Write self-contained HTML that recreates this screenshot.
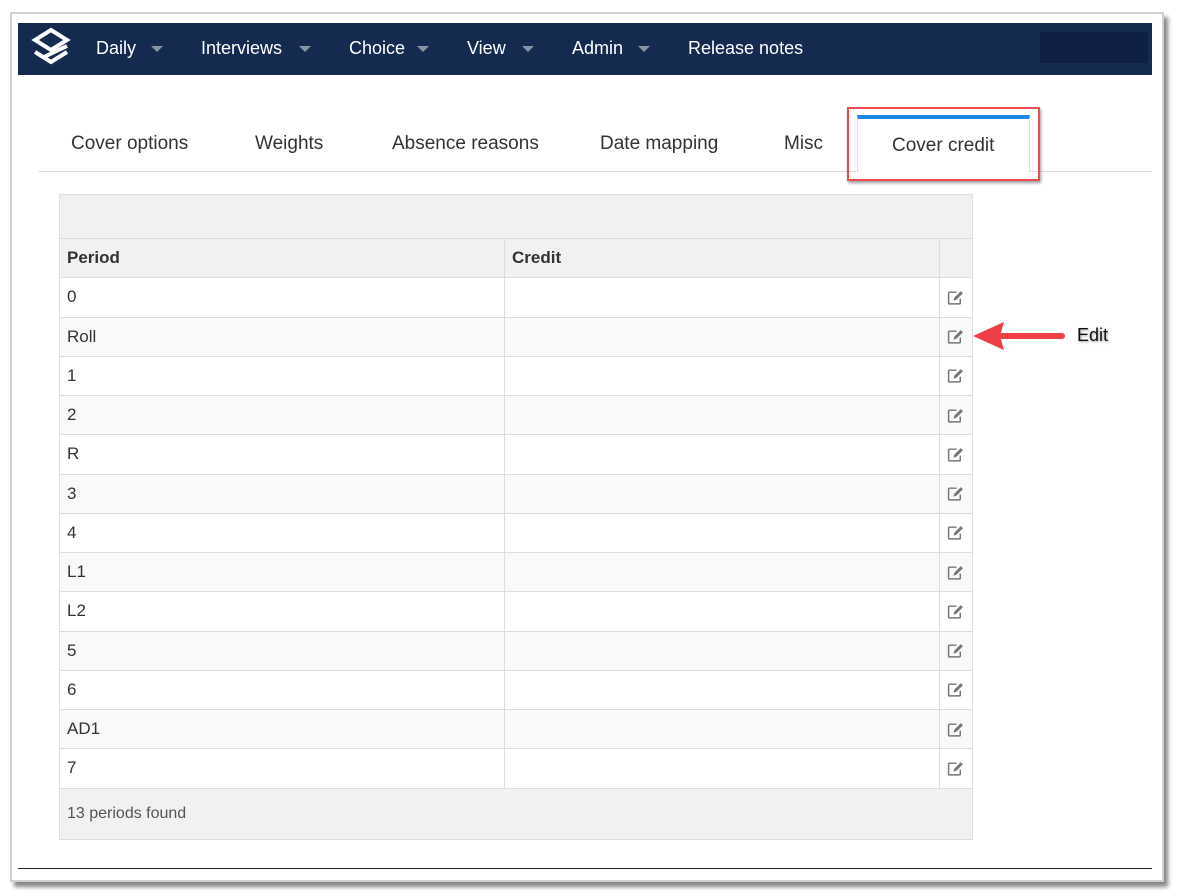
<!DOCTYPE html>
<html><head><style>
body{margin:0;width:1177px;height:895px;background:#fff;font-family:"Liberation Sans",sans-serif;position:relative;overflow:hidden}
.frame{position:absolute;left:10px;top:12px;width:1150px;height:866px;border:2px solid #d0d0d0;box-shadow:4px 5px 4px #888;background:#fff}
.nav{position:absolute;left:18px;top:23px;width:1134px;height:52px;background:#142a4e}
.nav span{position:absolute;top:15px;color:#fff;font-size:18px}
.nav i{position:absolute;top:23px;width:0;height:0;border-left:6px solid transparent;border-right:6px solid transparent;border-top:6px solid #8a93a5}
.tab{position:absolute;top:133px;font-size:19px;color:#333}
table{position:absolute;left:59px;top:194px;width:914px;border-collapse:collapse;font-size:17px;color:#333}
td{border:1px solid #ddd;height:39.25px;padding:0 7px;box-sizing:border-box}
tr.s td{background:#f9f9f9}
.ic{width:17px;height:15px;display:block;margin-left:0}
</style></head><body>
<div class="frame"></div>
<div class="nav">
<svg style="position:absolute;left:12px;top:4px" width="42" height="44" viewBox="0 0 42 44"><path d="M21 3 L37 13 L21 23 L5 13 Z" fill="none" stroke="#fff" stroke-width="4"/><path d="M5 25 L21 35 L37 25" fill="none" stroke="#fff" stroke-width="4"/><path d="M5 33 L21 43 L37 33" fill="none" stroke="#fff" stroke-width="0"/><path d="M14 30 L37 19" stroke="#fff" stroke-width="4"/></svg>
<span style="left:78px">Daily</span><i style="left:133px"></i>
<span style="left:183px">Interviews</span><i style="left:281px"></i>
<span style="left:331px">Choice</span><i style="left:399px"></i>
<span style="left:449px">View</span><i style="left:504px"></i>
<span style="left:554px">Admin</span><i style="left:620px"></i>
<span style="left:670px">Release notes</span>
<div style="position:absolute;left:1022px;top:9px;width:108px;height:31px;background:#0f1f45"></div>
</div>
<div class="tab" style="left:71px">Cover options</div>
<div class="tab" style="left:255px">Weights</div>
<div class="tab" style="left:392px">Absence reasons</div>
<div class="tab" style="left:600px">Date mapping</div>
<div class="tab" style="left:784px">Misc</div>
<div style="position:absolute;left:38px;top:171px;width:1114px;height:1px;background:#ddd"></div>
<div style="position:absolute;left:857px;top:115px;width:173px;height:57px;background:#fff;border-left:1px solid #ddd;border-right:1px solid #ddd;border-top:4px solid #1e88e5;box-sizing:border-box"></div>
<div class="tab" style="left:892px;top:135px">Cover credit</div>
<div style="position:absolute;left:847px;top:107px;width:189px;height:70px;border:2px solid #ef4a4f;box-shadow:1px 2px 3px #999"></div>
<table>
<tr><td colspan="3" style="height:44px;background:#f1f1f1"></td></tr>
<tr><td style="width:445px;background:#f1f1f1;font-weight:bold">Period</td><td style="width:435px;background:#f1f1f1;font-weight:bold">Credit</td><td style="background:#f1f1f1"></td></tr>
<tr><td>0</td><td></td><td>E</td></tr>
<tr class="s"><td>Roll</td><td></td><td>E</td></tr>
<tr><td>1</td><td></td><td>E</td></tr>
<tr class="s"><td>2</td><td></td><td>E</td></tr>
<tr><td>R</td><td></td><td>E</td></tr>
<tr class="s"><td>3</td><td></td><td>E</td></tr>
<tr><td>4</td><td></td><td>E</td></tr>
<tr class="s"><td>L1</td><td></td><td>E</td></tr>
<tr><td>L2</td><td></td><td>E</td></tr>
<tr class="s"><td>5</td><td></td><td>E</td></tr>
<tr><td>6</td><td></td><td>E</td></tr>
<tr class="s"><td>AD1</td><td></td><td>E</td></tr>
<tr><td>7</td><td></td><td>E</td></tr>
<tr><td colspan="3" style="height:51px;background:#f1f1f1;font-size:16px;color:#555">13 periods found</td></tr>
</table>
<script>
document.querySelectorAll('td').forEach(function(t){if(t.textContent==='E'){t.innerHTML='<svg class="ic" viewBox="0 0 16 14"><path d="M9 2 H2.5 Q1.5 2 1.5 3 V12 Q1.5 13 2.5 13 H11.5 Q12.5 13 12.5 12 V8" fill="none" stroke="#777" stroke-width="1.4"/><path d="M6 10 L7 7 L13 1 L15 3 L9 9 Z" fill="#777"/></svg>';}});
</script>
<svg style="position:absolute;left:970px;top:318px" width="100" height="36"><path d="M92 18 H30" stroke="#ef4048" stroke-width="6" stroke-linecap="round"/><path d="M3 18 L34 4 L30 18 L34 32 Z" fill="#ef4048"/></svg>
<div style="position:absolute;left:1077px;top:325px;font-size:18px;color:#111;text-shadow:1px 1px 2px #999">Edit</div>
<div style="position:absolute;left:18px;top:868px;width:1134px;height:1px;background:#222"></div>
</body></html>
